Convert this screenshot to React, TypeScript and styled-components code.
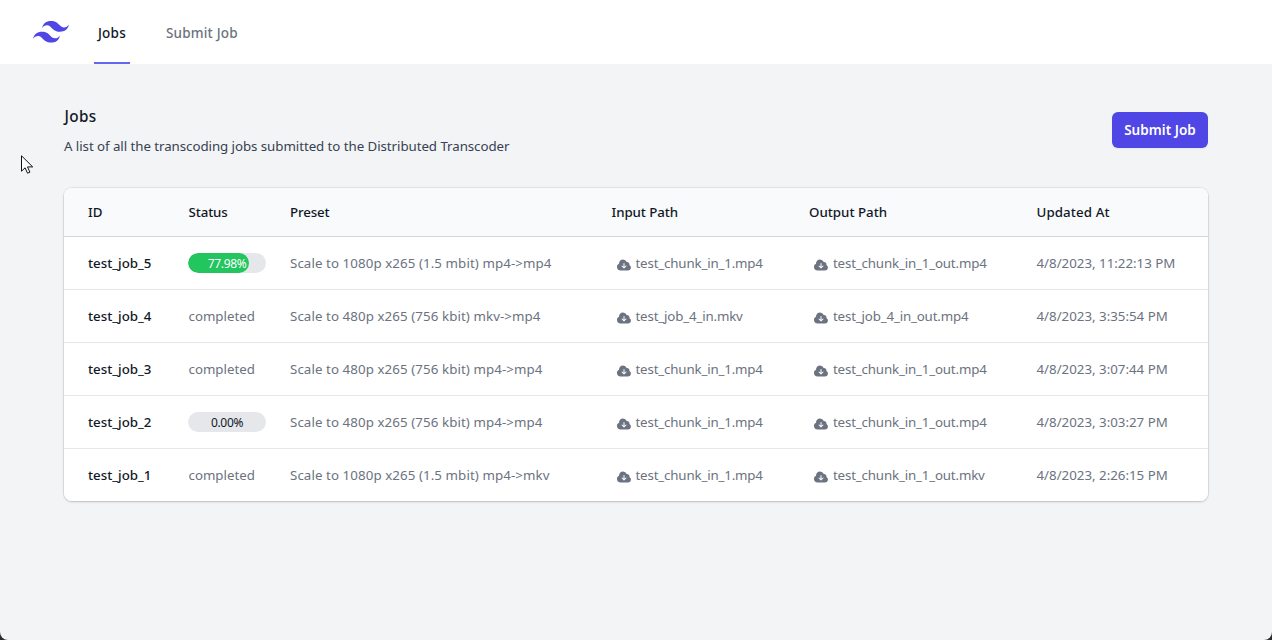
import React from "react";
import styled, { createGlobalStyle } from "styled-components";

const GlobalStyle = createGlobalStyle`
  * { box-sizing: border-box; }
  body {
    margin: 0;
    background: #2b2c2e;
    font-family: "Noto Sans", "Open Sans", sans-serif;
    font-size: 13.3px;
    line-height: 20px;
    color: #111827;
    overflow: hidden;
  }
  h1, p { margin: 0; }
`;

const Page = styled.div`
  height: 640px;
  background: #f3f4f6;
  border-radius: 0 0 8px 8px;
  overflow: hidden;
`;

const NavBar = styled.nav`
  display: flex;
  height: 64px;
  padding-left: 33px;
  background: #fff;
`;

const Logo = styled.svg`
  width: 36px;
  height: 22px;
  margin: 21px 25px 0 0;
  fill: #4f46e5;
`;

const NavLink = styled.a<{ $active?: boolean }>`
  display: flex;
  align-items: center;
  height: 64px;
  margin-right: 32px;
  padding: 4px 4px 0;
  border-bottom: 2px solid ${(p) => (p.$active ? "#6366f1" : "transparent")};
  color: ${(p) => (p.$active ? "#111827" : "#6b7280")};
  font-size: 13.5px;
  font-weight: 500;
  letter-spacing: 0.2px;
  white-space: nowrap;
`;

const Main = styled.main`
  padding: 40px 64px 0;
`;

const Header = styled.header`
  display: flex;
  justify-content: space-between;
  align-items: flex-start;
  height: 84px;
`;

const Title = styled.h1`
  padding-left: 0.5px;
  font-size: 15.3px;
  font-weight: 500;
  line-height: 24px;
  letter-spacing: 0.3px;
`;

const Subtitle = styled.p`
  margin-top: 8px;
  color: #374151;
  letter-spacing: -0.055px;
`;

const SubmitButton = styled.button`
  width: 96px;
  height: 36px;
  margin-top: 8px;
  padding: 0;
  border: 0;
  border-radius: 6px;
  background: #4f46e5;
  box-shadow: 0 1px 2px rgba(0, 0, 0, 0.05);
  color: #fff;
  font: 600 13.5px/20px "Noto Sans", sans-serif;
  letter-spacing: 0.05px;
`;

const Table = styled.div`
  background: #fff;
  border-radius: 8px;
  box-shadow: 0 0 0 1px rgba(0, 0, 0, 0.06), 0 1px 3px rgba(0, 0, 0, 0.1), 0 1px 2px rgba(0, 0, 0, 0.08);
  overflow: hidden;
`;

const Row = styled.div<{ $head?: boolean }>`
  display: grid;
  grid-template-columns: 100px 102px 321.5px 197.5px 227.5px 1fr;
  align-items: center;
  height: ${(p) => (p.$head ? 49 : 53)}px;
  padding-left: 24px;
  background: ${(p) => (p.$head ? "#f9fafb" : "#fff")};
  border-bottom: 1px solid ${(p) => (p.$head ? "#d1d5db" : "#e5e7eb")};
  &:last-child {
    height: 52px;
    border-bottom: 0;
  }
`;

const Cell = styled.div<{ $strong?: boolean; $track?: number; $inset?: number }>`
  padding-left: ${(p) => p.$inset ?? 0}px;
  color: ${(p) => (p.$strong ? "#111827" : "#6b7280")};
  font-weight: ${(p) => (p.$strong ? 500 : 400)};
  letter-spacing: ${(p) => p.$track ?? 0}px;
  white-space: nowrap;
`;

const FileLink = styled.a`
  display: flex;
  align-items: center;
  padding-left: 4.4px;
  letter-spacing: -0.16px;
`;

const DownloadIcon = styled.svg`
  width: 16px;
  height: 16px;
  margin: 4px 3.6px 0 0;
  fill: #6b7280;
`;

const Track = styled.div`
  width: 78px;
  height: 20px;
  border-radius: 10px;
  background: #e5e7eb;
  color: #111827;
  font-size: 12px;
  line-height: 22px;
  letter-spacing: -0.35px;
  text-align: center;
  overflow: hidden;
`;

const Fill = styled.div`
  height: 20px;
  padding-right: 2.5px;
  border-radius: 10px;
  background: #22c55e;
  color: #fff;
  text-align: right;
`;

const Pointer = styled.svg`
  position: absolute;
  left: 21px;
  top: 155px;
  width: 13px;
  height: 20px;
`;

type Job = { id: string; progress?: number; preset: string; input: string; output: string; updated: string };

const jobs: Job[] = [
  { id: "test_job_5", progress: 77.98, preset: "Scale to 1080p x265 (1.5 mbit) mp4->mp4", input: "test_chunk_in_1.mp4", output: "test_chunk_in_1_out.mp4", updated: "4/8/2023, 11:22:13 PM" },
  { id: "test_job_4", preset: "Scale to 480p x265 (756 kbit) mkv->mp4", input: "test_job_4_in.mkv", output: "test_job_4_in_out.mp4", updated: "4/8/2023, 3:35:54 PM" },
  { id: "test_job_3", preset: "Scale to 480p x265 (756 kbit) mp4->mp4", input: "test_chunk_in_1.mp4", output: "test_chunk_in_1_out.mp4", updated: "4/8/2023, 3:07:44 PM" },
  { id: "test_job_2", progress: 0, preset: "Scale to 480p x265 (756 kbit) mp4->mp4", input: "test_chunk_in_1.mp4", output: "test_chunk_in_1_out.mp4", updated: "4/8/2023, 3:03:27 PM" },
  { id: "test_job_1", preset: "Scale to 1080p x265 (1.5 mbit) mp4->mkv", input: "test_chunk_in_1.mp4", output: "test_chunk_in_1_out.mkv", updated: "4/8/2023, 2:26:15 PM" },
];

const columns: [string, number, number][] = [
  ["ID", 0, 0],
  ["Status", -0.15, 0.6],
  ["Preset", -0.15, 0],
  ["Input Path", -0.08, 0],
  ["Output Path", 0, 0],
  ["Updated At", 0.1, 0],
];

function Progress({ value }: { value: number }) {
  const label = `${value.toFixed(2)}%`;
  return <Track>{value > 0 ? <Fill style={{ width: `${value}%` }}>{label}</Fill> : label}</Track>;
}

function Download({ name }: { name: string }) {
  return (
    <FileLink>
      <DownloadIcon viewBox="0 0 24 24">
        <path
          fillRule="evenodd"
          clipRule="evenodd"
          d="M10.5 3.75a6 6 0 0 0-5.98 6.496A5.25 5.25 0 0 0 6.75 20.25H18a4.5 4.5 0 0 0 2.206-8.423 3.75 3.75 0 0 0-4.133-4.303A6.001 6.001 0 0 0 10.5 3.75Zm2.25 6a.75.75 0 0 0-1.5 0v4.94l-1.72-1.72a.75.75 0 0 0-1.06 1.06l3 3a.75.75 0 0 0 1.06 0l3-3a.75.75 0 1 0-1.06-1.06l-1.72 1.72V9.75Z"
        />
      </DownloadIcon>
      {name}
    </FileLink>
  );
}

export default function App() {
  return (
    <>
      <GlobalStyle />
      <Page>
        <NavBar>
          <Logo viewBox="0 0 54 33">
            <path d="M27 0c-7.2 0-11.7 3.6-13.5 10.8 2.7-3.6 5.85-4.95 9.45-4.05 2.054.513 3.522 2.004 5.147 3.653C30.744 13.09 33.808 16.2 40.5 16.2c7.2 0 11.7-3.6 13.5-10.8-2.7 3.6-5.85 4.95-9.45 4.05-2.054-.513-3.522-2.004-5.147-3.653C36.756 3.11 33.692 0 27 0zM13.5 16.2C6.3 16.2 1.8 19.8 0 27c2.7-3.6 5.85-4.95 9.45-4.05 2.054.514 3.522 2.004 5.147 3.653C17.244 29.29 20.308 32.4 27 32.4c7.2 0 11.7-3.6 13.5-10.8-2.7 3.6-5.85 4.95-9.45 4.05-2.054-.513-3.522-2.004-5.147-3.653C23.256 19.31 20.192 16.2 13.5 16.2z" />
          </Logo>
          <NavLink $active>Jobs</NavLink>
          <NavLink>Submit Job</NavLink>
        </NavBar>
        <Main>
          <Header>
            <div>
              <Title>Jobs</Title>
              <Subtitle>A list of all the transcoding jobs submitted to the Distributed Transcoder</Subtitle>
            </div>
            <SubmitButton>Submit Job</SubmitButton>
          </Header>
          <Table>
            <Row $head>
              {columns.map(([name, track, inset]) => (
                <Cell key={name} $strong $track={track} $inset={inset}>{name}</Cell>
              ))}
            </Row>
            {jobs.map((job) => (
              <Row key={job.id}>
                <Cell $strong>{job.id}</Cell>
                {job.progress === undefined ? (
                  <Cell $inset={0.5}>completed</Cell>
                ) : (
                  <Cell><Progress value={job.progress} /></Cell>
                )}
                <Cell $track={0.087}>{job.preset}</Cell>
                <Cell><Download name={job.input} /></Cell>
                <Cell><Download name={job.output} /></Cell>
                <Cell>{job.updated}</Cell>
              </Row>
            ))}
          </Table>
        </Main>
      </Page>
      <Pointer viewBox="0 0 13 20">
        <path d="M.5.8v15.4l3.6-3.4 2.4 5.4 2.4-1-2.4-5.3h5.2z" fill="#fff" stroke="#111" strokeWidth="1" />
      </Pointer>
    </>
  );
}
